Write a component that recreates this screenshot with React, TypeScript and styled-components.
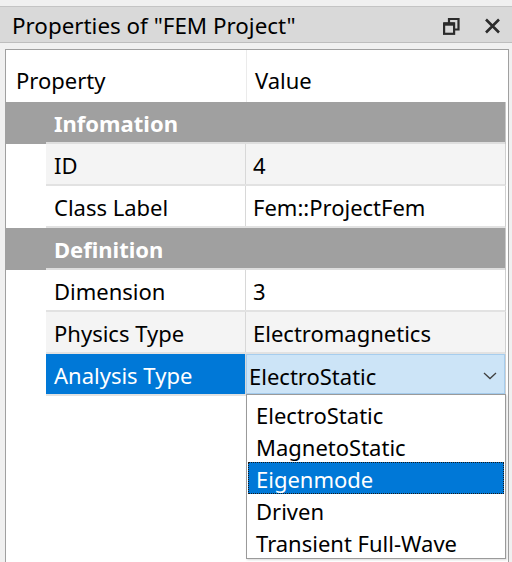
import React from 'react';
import styled, { createGlobalStyle } from 'styled-components';

const GlobalStyle = createGlobalStyle`
  html, body {
    margin: 0;
    padding: 0;
    background: #f0f0f0;
  }
  body {
    font-family: "Segoe UI", "Noto Sans", sans-serif;
    color: #000;
  }
`;

type Item = { name: string; value: string; shaded?: boolean };

const sections: { title: string; items: Item[] }[] = [
  {
    title: 'Infomation',
    items: [
      { name: 'ID', value: '4', shaded: true },
      { name: 'Class Label', value: 'Fem::ProjectFem' },
    ],
  },
  {
    title: 'Definition',
    items: [
      { name: 'Dimension', value: '3' },
      { name: 'Physics Type', value: 'Electromagnetics', shaded: true },
    ],
  },
];

const options = ['ElectroStatic', 'MagnetoStatic', 'Eigenmode', 'Driven', 'Transient Full-Wave'];

const App = () => {
  return (
    <Panel>
      <GlobalStyle />
      <TitleBar>
        <Title>Properties of "FEM Project"</Title>
        <TitleButtons>
          <svg width="17" height="18" viewBox="0 0 17 18">
            <path d="M6 6V2h9.5v10.5H11" fill="none" stroke="#2b2b2b" strokeWidth="2.2" />
            <rect x="1.1" y="6.4" width="10" height="10.4" fill="none" stroke="#2b2b2b" strokeWidth="2.2" />
            <rect x="1" y="5.5" width="10.5" height="3.2" fill="#2b2b2b" />
          </svg>
          <svg width="17" height="16" viewBox="0 0 17 16">
            <path d="M2 1.5l13 13M15 1.5l-13 13" stroke="#2b2b2b" strokeWidth="2.6" />
          </svg>
        </TitleButtons>
      </TitleBar>
      <Grid>
        <HeaderRow>
          <HeaderCell>Property</HeaderCell>
          <HeaderCell>Value</HeaderCell>
        </HeaderRow>
        {sections.map((s) => (
          <React.Fragment key={s.title}>
            <CategoryRow>{s.title}</CategoryRow>
            {s.items.map((it) => (
              <PropRow key={it.name} $shaded={it.shaded}>
                <NameCell>{it.name}</NameCell>
                <ValueCell>{it.value}</ValueCell>
              </PropRow>
            ))}
          </React.Fragment>
        ))}
        <PropRow>
          <NameCell $selected>Analysis Type</NameCell>
          <EditCell>
            <Combo>
              <span>ElectroStatic</span>
              <svg width="14" height="8" viewBox="0 0 14 8">
                <path d="M1 1l6 5.5L13 1" fill="none" stroke="#404040" strokeWidth="1.3" />
              </svg>
            </Combo>
            <DropList>
              {options.map((o) => (
                <Option key={o} $active={o === 'Eigenmode'}>
                  {o}
                </Option>
              ))}
            </DropList>
          </EditCell>
        </PropRow>
      </Grid>
    </Panel>
  );
};

export default App;

const Panel = styled.div`
  width: 512px;
  height: 562px;
  display: flex;
  flex-direction: column;
  overflow: hidden;
  padding-top: 6px;
  box-sizing: border-box;
`;

const TitleBar = styled.div`
  height: 37px;
  box-sizing: border-box;
  background: #d9d9d9;
  border-top: 1px solid #c4c4c4;
  border-bottom: 1px solid #bdbdbd;
  display: flex;
  align-items: center;
  justify-content: space-between;
  padding: 0 11px 0 12px;
`;

const Title = styled.div`
  font-size: 22.4px;
  line-height: 1;
  padding-top: 3px;
`;

const TitleButtons = styled.div`
  display: flex;
  align-items: center;
  gap: 24px;
  padding-top: 2px;
  svg {
    display: block;
  }
`;

const Grid = styled.div`
  flex: 1;
  margin: 6px 3px 0 5px;
  background: #fff;
  border: 1px solid #a0a0a0;
  border-bottom: none;
  padding-right: 2px;
`;

const HeaderRow = styled.div`
  display: grid;
  grid-template-columns: 240px 1fr;
  height: 52px;
`;

const HeaderCell = styled.div`
  display: flex;
  align-items: center;
  padding-left: 10px;
  padding-top: 7px;
  font-size: 22px;
  & + & {
    border-left: 1px solid #ebebeb;
    padding-left: 8px;
  }
`;

const CategoryRow = styled.div`
  position: relative;
  height: 42px;
  box-sizing: border-box;
  background: #a0a0a0;
  color: #fff;
  font-weight: 700;
  font-size: 22px;
  display: flex;
  align-items: center;
  padding-left: 48px;
  border-right: 1px solid #c8c8c8;
  &::after {
    content: '';
    position: absolute;
    left: 40px;
    right: 0;
    bottom: 0;
    height: 2px;
    background: #dedede;
  }
`;

const PropRow = styled.div<{ $shaded?: boolean }>`
  margin-left: 40px;
  height: 42px;
  box-sizing: border-box;
  display: grid;
  grid-template-columns: 200px 1fr;
  background: ${(p) => (p.$shaded ? '#f4f4f4' : '#fff')};
  border-bottom: 2px solid #e2e2e2;
  border-right: 1px solid #d0d0d0;
`;

const NameCell = styled.div<{ $selected?: boolean }>`
  display: flex;
  align-items: center;
  padding: 2px 0 0 8px;
  font-size: 22px;
  background: ${(p) => (p.$selected ? '#0078d7' : 'transparent')};
  color: ${(p) => (p.$selected ? '#fff' : '#000')};
  border-right: 1px solid #d8d8d8;
`;

const ValueCell = styled.div`
  display: flex;
  align-items: center;
  padding: 2px 0 0 7px;
  font-size: 22px;
`;

const EditCell = styled.div`
  position: relative;
`;

const Combo = styled.div`
  height: 40px;
  box-sizing: border-box;
  background: #cce4f7;
  border: 1px solid #a6cdee;
  display: flex;
  align-items: center;
  justify-content: space-between;
  padding: 3px 7px 0 2px;
  font-size: 22px;
  svg {
    display: block;
  }
`;

const DropList = styled.div`
  position: absolute;
  top: 40px;
  left: 0;
  right: -1px;
  background: #fff;
  border: 1px solid #9a9a9a;
  padding: 3px 1px 0;
  box-shadow: 1px 1px 2px rgba(0, 0, 0, 0.15);
`;

const Option = styled.div<{ $active?: boolean }>`
  height: 32px;
  box-sizing: border-box;
  display: flex;
  align-items: center;
  padding: 1px 0 0 7px;
  font-size: 22px;
  background: ${(p) => (p.$active ? '#0078d7' : 'transparent')};
  color: ${(p) => (p.$active ? '#fff' : '#000')};
  border: 1px ${(p) => (p.$active ? 'dotted #1a1a1a' : 'solid transparent')};
`;
